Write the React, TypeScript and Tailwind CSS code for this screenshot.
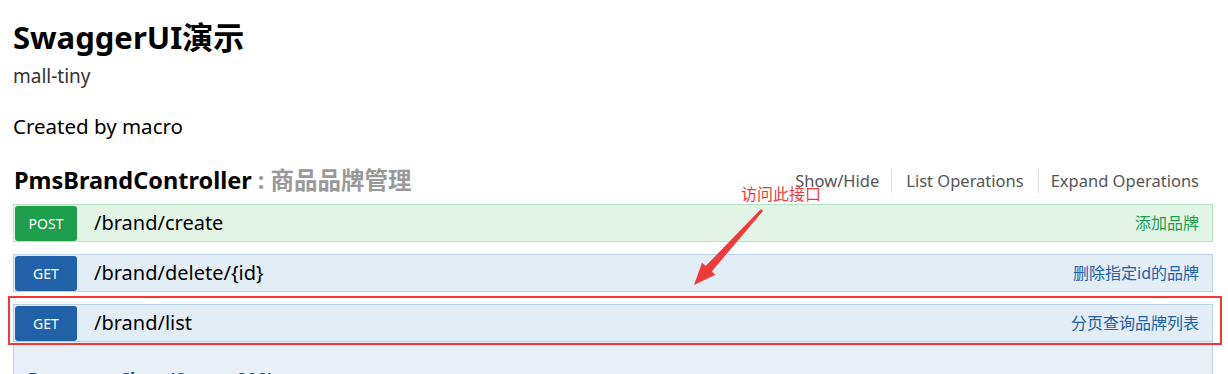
import React from 'react';

const ops = [
  { method: 'POST', path: '/brand/create', summary: '添加品牌' },
  { method: 'GET', path: '/brand/delete/{id}', summary: '删除指定id的品牌' },
  { method: 'GET', path: '/brand/list', summary: '分页查询品牌列表', open: true },
];

function OpRow({ method, path, summary, open }: { method: string; path: string; summary: string; open?: boolean }) {
  const isPost = method === 'POST';
  return (
    <div className="mb-[12px]">
      <div
        className={`flex items-center h-[38px] border pl-px pr-[13px] ${
          isPost ? 'bg-[#e2f4e6] border-[#b6e3c1]' : 'bg-[#e3edf6] border-[#bcd2e8]'
        }`}
      >
        <span
          className={`w-[62px] h-[35px] flex items-center justify-center rounded-[3px] text-white text-[14px] ${
            isPost ? 'bg-[#1c9e4a]' : 'bg-[#2061a9]'
          }`}
        >
          {method}
        </span>
        <span className="ml-[17px] text-[20px] text-black">{path}</span>
        <span className={`ml-auto text-[16px] ${isPost ? 'text-[#1c9e4a]' : 'text-[#2061a9]'}`}>{summary}</span>
      </div>
      {open && (
        <div className="h-[60px] bg-[#e8eff7] border border-t-0 border-[#bcd2e8] px-[14px] pt-[24px]">
          <div className="text-[18px] font-bold text-[#1e4f8a]">Response Class (Status 200)</div>
        </div>
      )}
    </div>
  );
}

export default function App() {
  return (
    <div
      className="relative w-[1228px] h-[374px] overflow-hidden bg-white"
      style={{ fontFamily: '"Noto Sans", "Noto Sans CJK SC", sans-serif' }}
    >
      <div className="pl-[13px] pr-[15px] pt-[17px]">
        <h1 className="text-[31px] font-bold leading-[40px] text-black">SwaggerUI演示</h1>
        <div className="text-[19px] leading-[24px] text-[#333] mt-[7px]">mall-tiny</div>
        <div className="text-[20.5px] leading-[26px] text-black mt-[25px]">Created by macro</div>

        <div className="flex items-center mt-[27px] h-[30px] mb-[8px]">
          <h2 className="text-[23.5px] font-bold text-black pl-px">
            PmsBrandController
            <span className="text-[#999]"> : 商品品牌管理</span>
          </h2>
          <div className="ml-auto flex items-center text-[16.5px] text-[#555] pr-[14px]">
            <span className="pr-[12px]">Show/Hide</span>
            <span className="border-l border-[#ddd] px-[14px]">List Operations</span>
            <span className="border-l border-[#ddd] pl-[12px]">Expand Operations</span>
          </div>
        </div>

        {ops.map(op => (
          <OpRow key={op.path} {...op} />
        ))}
      </div>

      {/* annotation */}
      <div className="absolute left-[8px] top-[296px] w-[1214px] h-[49px] border-2 border-[#f03a3a]" />
      <div
        className="absolute left-[741px] top-[181px] text-[16px] leading-[24px] text-[#f03a3a]"
        style={{ fontFamily: '"Noto Sans CJK SC", sans-serif' }}
      >
        访问此接口
      </div>
      <svg className="absolute left-[690px] top-[205px]" width="80" height="85" viewBox="0 0 80 85">
        <path d="M71 4 L73 6 L21.7 66.4 L25.4 69.7 L4 80 L12 57.7 L15.7 61 Z" fill="#f03a3a" />
      </svg>
    </div>
  );
}
